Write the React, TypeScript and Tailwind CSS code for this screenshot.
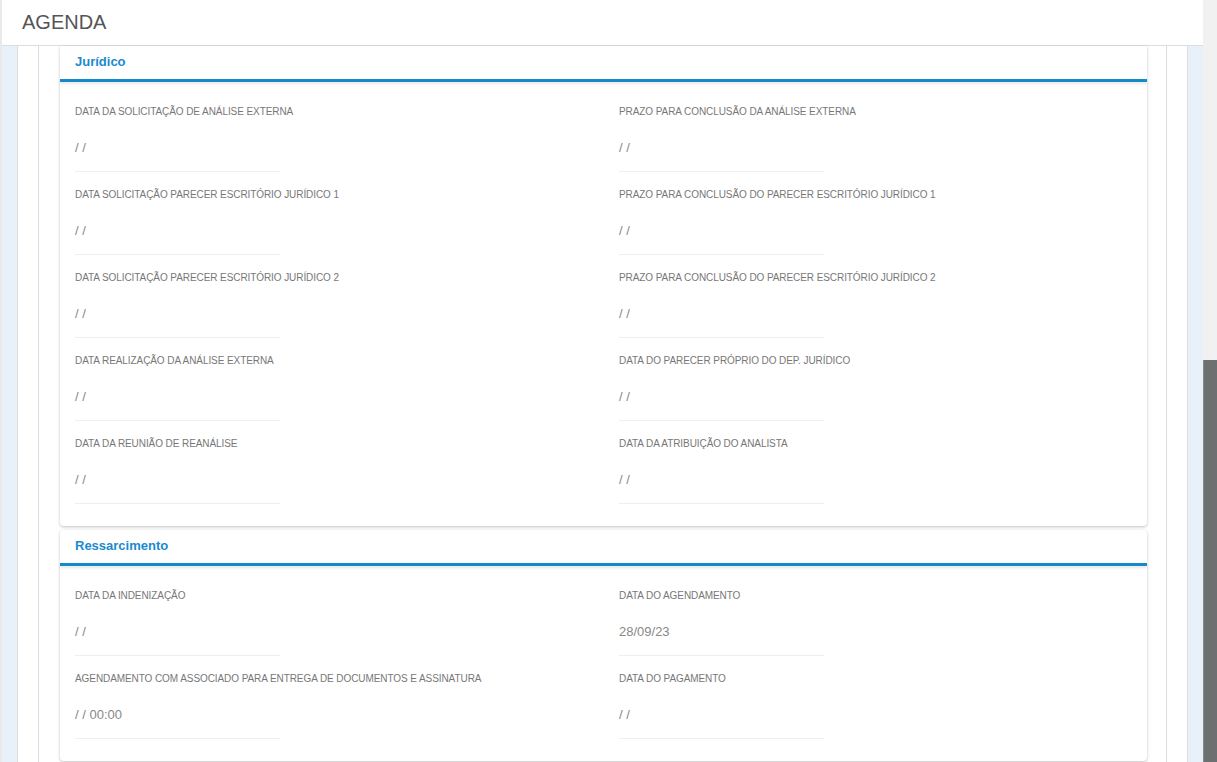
type Field = { label: string; value: string };

const juridico: Field[] = [
  { label: "DATA DA SOLICITAÇÃO DE ANÁLISE EXTERNA", value: "/ /" },
  { label: "PRAZO PARA CONCLUSÃO DA ANÁLISE EXTERNA", value: "/ /" },
  { label: "DATA SOLICITAÇÃO PARECER ESCRITÓRIO JURÍDICO 1", value: "/ /" },
  { label: "PRAZO PARA CONCLUSÃO DO PARECER ESCRITÓRIO JURÍDICO 1", value: "/ /" },
  { label: "DATA SOLICITAÇÃO PARECER ESCRITÓRIO JURÍDICO 2", value: "/ /" },
  { label: "PRAZO PARA CONCLUSÃO DO PARECER ESCRITÓRIO JURÍDICO 2", value: "/ /" },
  { label: "DATA REALIZAÇÃO DA ANÁLISE EXTERNA", value: "/ /" },
  { label: "DATA DO PARECER PRÓPRIO DO DEP. JURÍDICO", value: "/ /" },
  { label: "DATA DA REUNIÃO DE REANÁLISE", value: "/ /" },
  { label: "DATA DA ATRIBUIÇÃO DO ANALISTA", value: "/ /" },
];

const ressarcimento: Field[] = [
  { label: "DATA DA INDENIZAÇÃO", value: "/ /" },
  { label: "DATA DO AGENDAMENTO", value: "28/09/23" },
  { label: "AGENDAMENTO COM ASSOCIADO PARA ENTREGA DE DOCUMENTOS E ASSINATURA", value: "/ / 00:00" },
  { label: "DATA DO PAGAMENTO", value: "/ /" },
];

const DateField = ({ field }: { field: Field }) => (
  <div>
    <div className="h-[14px] leading-[14px] text-[10px] tracking-[-0.08px] text-[#777] whitespace-nowrap">
      {field.label}
    </div>
    <div className="mt-[22px] h-[14px] leading-[14px] text-[13px] text-[#888]">{field.value}</div>
    <div className="mt-[16px] h-px w-[205px] bg-[#eeeeee]" />
  </div>
);

const Section = ({ title, fields, top }: { title: string; fields: Field[]; top?: boolean }) => (
  <div
    className={
      "bg-white shadow-[0_1px_3px_rgba(0,0,0,0.25)] " + (top ? "rounded-b-[4px]" : "rounded-[4px]")
    }
  >
    <div className="h-[33px] pl-[15px] pt-[6px] text-[13px] font-bold text-[#1a8ad0]">{title}</div>
    <div className="h-[3px] bg-[#1589ca] shadow-[0_2px_3px_rgba(0,0,0,0.1)]" />
    <div className="grid grid-cols-[544px_1fr] gap-y-[16px] pl-[15px] pt-[23px] pb-[22px]">
      {fields.map((f) => (
        <DateField key={f.label} field={f} />
      ))}
    </div>
  </div>
);

export default function App() {
  return (
    <div className="flex h-[762px] overflow-hidden bg-[#e9e9e9] font-['Liberation_Sans',Arial,sans-serif]">
      <div className="ml-[2px] flex min-w-0 flex-1 flex-col">
        <header className="h-[46px] shrink-0 border-b border-[#dddddd] bg-white pl-[20px] text-[20px] leading-[44px] text-[#555]">
          AGENDA
        </header>
        <div className="flex min-h-0 flex-1 bg-[#e8f1f9] pl-[15px] pr-[15px]">
          <div className="flex flex-1 border-x border-[#dddddd] bg-white pl-[20px] pr-[20px]">
            <div className="flex-1 border-x border-[#dddddd] pl-[21px] pr-[19px]">
              <div className="flex flex-col gap-[4px]">
                <Section title="Jurídico" fields={juridico} top />
                <Section title="Ressarcimento" fields={ressarcimento} />
              </div>
            </div>
          </div>
        </div>
      </div>
      {/* page scrollbar */}
      <div className="flex w-[14px] shrink-0 flex-col bg-[#f1f1f1]">
        <div className="h-[360px] shrink-0" />
        <div className="flex-1 border-l border-[#8a8c8c] bg-[#6d7070]" />
      </div>
    </div>
  );
}
